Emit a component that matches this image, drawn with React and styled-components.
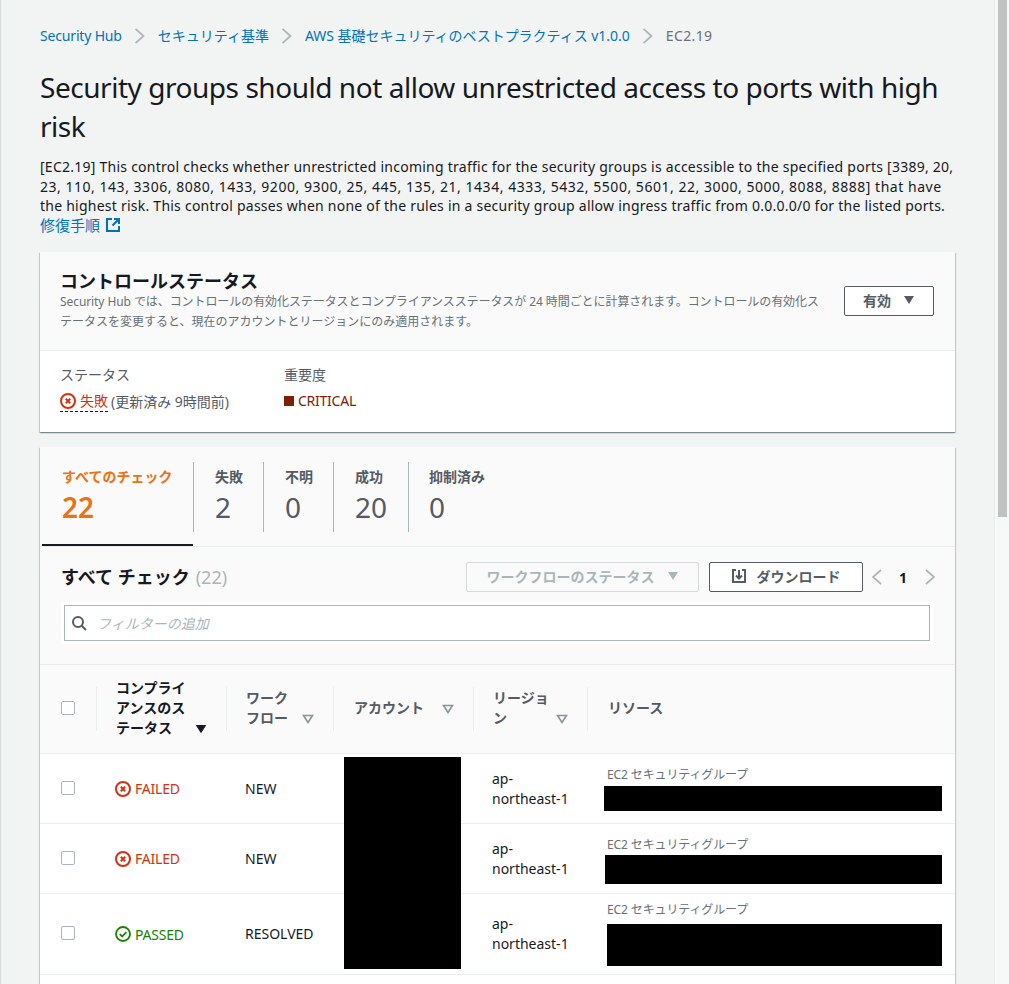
import React from 'react';
import styled, { createGlobalStyle } from 'styled-components';

const FONT = `"Noto Sans", "Noto Sans CJK JP", sans-serif`;

const GlobalStyle = createGlobalStyle`
  html, body {
    margin: 0;
    padding: 0;
    height: 984px;
    overflow: hidden;
    background: #f2f3f3;
  }
  * {
    box-sizing: border-box;
  }
`;

const Page = styled.div`
  display: flex;
  width: 1009px;
  height: 984px;
  overflow: hidden;
  font-family: ${FONT};
  font-size: 14px;
  color: #16191f;
`;

const Main = styled.main`
  flex: 1;
  min-width: 0;
  padding: 26px 39px 0;
  background: #f2f3f3;
  border-left: 1px solid #d5dbdb;
`;

const ScrollTrack = styled.div`
  flex: 0 0 15px;
  padding: 0 2px 0 3px;
  background: #f7f8f8;
  border-left: 1px solid #e8eaea;
`;

const ScrollThumb = styled.div`
  height: 517px;
  background: #c1c1c1;
`;

const Breadcrumbs = styled.nav`
  display: flex;
  align-items: center;
  height: 20px;
  line-height: 20px;
`;

const Crumb = styled.a`
  color: ${(p) => (p.$current ? '#687078' : '#0073bb')};
  white-space: nowrap;
  letter-spacing: ${(p) => p.$spacing || 0}px;
`;

const CrumbChevron = styled.svg`
  width: 12px;
  height: 16px;
  margin: 0 12px;
  flex: none;
`;

const Title = styled.h1`
  margin: 22px 0 11px;
  font-size: 28px;
  font-weight: 400;
  line-height: 39px;
  letter-spacing: -0.46px;
`;

const Description = styled.div`
  margin: 0 0 17px;
  line-height: 19.5px;
`;

const DescriptionLine = styled.div`
  white-space: nowrap;
  letter-spacing: ${(p) => p.$spacing}px;
`;

const ExternalLink = styled.a`
  display: inline-flex;
  align-items: center;
  gap: 6px;
  color: #0073bb;
  font-size: 15px;
`;

const Card = styled.section`
  background: #fff;
  box-shadow: 0 1px 1px 0 rgba(0, 28, 36, 0.3), 1px 1px 1px 0 rgba(0, 28, 36, 0.15),
    -1px 1px 1px 0 rgba(0, 28, 36, 0.15);
  margin-bottom: 15px;
`;

const CardHeader = styled.header`
  display: flex;
  justify-content: space-between;
  align-items: center;
  height: 99px;
  padding: 0 21px 0 20px;
  background: #fafafa;
  border-bottom: 1px solid #eaeded;
`;

const CardHeading = styled.div`
  width: 765px;
`;

const CardTitle = styled.h2`
  margin: 0;
  font-size: 18px;
  font-weight: 700;
  line-height: 22px;
`;

const CardSub = styled.p`
  margin: 0;
  font-size: 12px;
  line-height: 20px;
  color: #687078;
`;

const TightLine = styled.span`
  letter-spacing: -0.08px;
  white-space: nowrap;
`;

const Button = styled.button`
  display: flex;
  align-items: center;
  justify-content: center;
  gap: ${(p) => p.$gap || 12}px;
  flex: none;
  width: ${(p) => p.$width}px;
  height: 30px;
  margin-left: ${(p) => p.$left || 0}px;
  padding: 0 0 2px;
  background: ${(p) => (p.$disabled ? 'transparent' : '#fff')};
  border: 1px solid ${(p) => (p.$disabled ? '#d5dbdb' : '#545b64')};
  border-radius: 2px;
  color: ${(p) => (p.$disabled ? '#aab7b8' : '#545b64')};
  font-family: ${FONT};
  font-size: 14px;
  font-weight: 700;
  white-space: nowrap;
`;

const StatusBody = styled.div`
  display: flex;
  height: 81px;
  padding: 14px 20px 0;
`;

const StatusColumn = styled.div`
  width: ${(p) => p.$width}px;
`;

const StatusLabel = styled.div`
  color: #545b64;
  line-height: 20px;
  margin-bottom: 6px;
`;

const StatusValue = styled.div`
  display: flex;
  align-items: center;
  line-height: 20px;
  color: #545b64;
`;

const StatusTip = styled.span`
  display: inline-flex;
  align-items: center;
  gap: 4px;
  color: #d13212;
  border-bottom: 1px dashed #16191f;
  margin-right: 3px;
`;

const Severity = styled.span`
  display: inline-flex;
  align-items: center;
  gap: 4px;
  color: #7d2105;
  letter-spacing: -0.25px;
`;

const SeveritySquare = styled.i`
  width: 10px;
  height: 10px;
  background: #7d2105;
`;

const Tabs = styled.div`
  display: flex;
  height: 100px;
  padding-left: 2px;
  background: #fafafa;
  border-bottom: 1px solid #eaeded;
`;

const Tab = styled.div`
  width: ${(p) => p.$width}px;
  height: 99px;
  padding-top: 15px;
  border-bottom: 2px solid ${(p) => (p.$active ? '#16191f' : 'transparent')};
`;

const TabInner = styled.div`
  height: 70px;
  margin-right: -1px;
  padding: 5px 0 0 ${(p) => p.$pad}px;
  border-right: ${(p) => (p.$last ? 'none' : '1px solid #aab7b8')};
  color: ${(p) => (p.$active ? '#ec7211' : '#545b64')};
`;

const TabLabel = styled.div`
  font-size: 14px;
  font-weight: 700;
  line-height: 20px;
  white-space: nowrap;
`;

const TabCount = styled.div`
  font-size: 28px;
  line-height: 40px;
  font-weight: ${(p) => (p.$active ? 600 : 400)};
`;

const Toolbar = styled.div`
  height: 118px;
  padding: 15px 22px 0 21px;
  background: #fafafa;
  border-bottom: 1px solid #eaeded;
`;

const ToolbarTop = styled.div`
  display: flex;
  align-items: center;
  height: 30px;
`;

const ToolbarTitle = styled.h2`
  flex: 1;
  margin: 0;
  padding-bottom: 2px;
  font-size: 18px;
  font-weight: 700;
  white-space: nowrap;
`;

const ToolbarCount = styled.span`
  font-weight: 400;
  color: #aab7b8;
  font-size: 18px;
  margin-left: 6px;
`;

const Pager = styled.div`
  display: flex;
  align-items: center;
  margin: 0 -4px 0 7px;
`;

const PagerNumber = styled.span`
  width: 39px;
  padding-right: 1px;
  text-align: center;
  font-size: 14px;
  font-weight: 700;
`;

const FilterWrap = styled.div`
  margin-top: 10px;
  height: 42px;
  padding: 3px;
  background: #fff;
`;

const FilterBox = styled.div`
  display: flex;
  align-items: center;
  gap: 10px;
  height: 36px;
  padding-left: 6px;
  border: 1px solid #aab7b8;
  color: #aab7b8;
  font-style: italic;
`;

const HeadRow = styled.div`
  display: grid;
  grid-template-columns: 56px 130px 107px 140px 114px 1fr;
  align-items: center;
  height: 89px;
  padding-bottom: 2px;
  background: #fafafa;
  border-bottom: 1px solid #eaeded;
`;

const HeadCell = styled.div`
  display: flex;
  justify-content: ${(p) => (p.$center ? 'center' : 'space-between')};
  align-items: center;
  height: 60px;
  padding: ${(p) => (p.$center ? '0' : '0 19px 0 20px')};
  background: ${(p) => (p.$plain ? 'none' : 'linear-gradient(#eaeded, #eaeded) left calc(50% + 1px) / 1px 44px no-repeat')};
`;

const HeadInner = styled.div`
  display: flex;
  justify-content: space-between;
  align-items: flex-end;
  width: 100%;
`;

const HeadText = styled.span`
  margin-left: ${(p) => p.$shift || 0}px;
  font-weight: 700;
  line-height: 20px;
  color: ${(p) => (p.$dark ? '#16191f' : '#545b64')};
`;

const SortIcon = styled.svg`
  width: 12px;
  height: 10px;
  margin-bottom: 4px;
  flex: none;
`;

const Check = styled.span`
  display: block;
  width: 14px;
  height: 14px;
  background: #fff;
  border: 1px solid #aab7b8;
  border-radius: 2px;
`;

const Rows = styled.div`
  position: relative;
  background: #fff;
  padding-bottom: 10px;
`;

const Row = styled.div`
  display: grid;
  grid-template-columns: 56px 130px 107px 140px 114px 1fr;
  align-items: center;
  height: ${(p) => p.$height}px;
  border-bottom: 1px solid #eaeded;
`;

const CheckCell = styled.div`
  display: flex;
  justify-content: center;
  padding-bottom: 2px;
`;

const StatusCell = styled.div`
  display: flex;
  align-items: center;
  gap: 4px;
  padding-left: 19px;
  color: ${(p) => (p.$ok ? '#1d8102' : '#d13212')};
  letter-spacing: -0.2px;
`;

const TextCell = styled.div`
  padding-left: ${(p) => p.$pad || 0}px;
  line-height: 20px;
`;

const ResourceCell = styled.div`
  align-self: start;
  padding-top: ${(p) => p.$top}px;
`;

const ResourceType = styled.div`
  padding-left: 20px;
  font-size: 12px;
  line-height: 16px;
  color: #687078;
  letter-spacing: -0.12px;
`;

const Redacted = styled.div`
  height: ${(p) => p.$height}px;
  margin: ${(p) => p.$gap}px 13px 0 ${(p) => p.$inset}px;
  background: #000;
`;

const AccountMask = styled.div`
  position: absolute;
  left: 304px;
  top: 3px;
  width: 117px;
  height: 212px;
  background: #000;
`;

const Chevron = ({ dir = 'right', color = '#879596' }) => (
  <svg width="14" height="16" viewBox="0 0 14 16" fill="none" stroke={color} strokeWidth="1.7">
    <path d={dir === 'right' ? 'M3 1l8 7-8 7' : 'M11 1L3 8l8 7'} />
  </svg>
);

const CrumbSep = () => (
  <CrumbChevron viewBox="0 0 12 16" fill="none" stroke="#aab7b8" strokeWidth="1.8">
    <path d="M1.5 .8l8 7.2-8 7.2" />
  </CrumbChevron>
);

const FailIcon = () => (
  <svg width="16" height="16" viewBox="0 0 16 16" fill="none" stroke="#d13212" strokeWidth="2" style={{ flex: 'none' }}>
    <circle cx="8" cy="8" r="7" />
    <path d="M5.8 5.8l4.4 4.4M10.2 5.8l-4.4 4.4" />
  </svg>
);

const PassIcon = () => (
  <svg width="16" height="16" viewBox="0 0 16 16" fill="none" stroke="#1d8102" strokeWidth="1.8" style={{ flex: 'none' }}>
    <circle cx="8" cy="8" r="7" />
    <path d="M4.8 8.2l2.3 2.3 4.2-4.4" />
  </svg>
);

const Caret = ({ color }) => (
  <svg width="12" height="10" viewBox="0 0 12 10" fill={color} style={{ flex: 'none' }}>
    <path d="M1 1h10L6 9z" />
  </svg>
);

const Sort = ({ active }) => (
  <SortIcon viewBox="0 0 12 10" fill={active ? '#16191f' : 'none'} stroke={active ? '#16191f' : '#879596'} strokeWidth={active ? 1 : 1.6}>
    <path d="M1.5 1.5h9L6 8.5z" />
  </SortIcon>
);

const DESCRIPTION = [
  { text: '[EC2.19] This control checks whether unrestricted incoming traffic for the security groups is accessible to the specified ports [3389, 20,', spacing: 0.25 },
  { text: '23, 110, 143, 3306, 8080, 1433, 9200, 9300, 25, 445, 135, 21, 1434, 4333, 5432, 5500, 5601, 22, 3000, 5000, 8088, 8888] that have', spacing: 0.525 },
  { text: 'the highest risk. This control passes when none of the rules in a security group allow ingress traffic from 0.0.0.0/0 for the listed ports.', spacing: 0.24 },
];

const TABS = [
  { label: 'すべてのチェック', count: 22, width: 151, pad: 20, active: true },
  { label: '失敗', count: 2, width: 70, pad: 22 },
  { label: '不明', count: 0, width: 70, pad: 22 },
  { label: '成功', count: 20, width: 75, pad: 22 },
  { label: '抑制済み', count: 0, width: 120, pad: 21, last: true },
];

const ROWS = [
  { status: 'FAILED', workflow: 'NEW', height: 70, top: 13, gap: 3, inset: 17, mask: 25 },
  { status: 'FAILED', workflow: 'NEW', height: 70, top: 13, gap: 2, inset: 18, mask: 29 },
  { status: 'PASSED', workflow: 'RESOLVED', height: 81, top: 8, gap: 6, inset: 20, mask: 42 },
];

export default function App() {
  return (
    <>
      <GlobalStyle />
      <Page>
        <Main>
          <Breadcrumbs>
            <Crumb $spacing={-0.17}>Security Hub</Crumb>
            <CrumbSep />
            <Crumb>セキュリティ基準</Crumb>
            <CrumbSep />
            <Crumb $spacing={-0.03}>AWS 基礎セキュリティのベストプラクティス v1.0.0</Crumb>
            <CrumbSep />
            <Crumb $current $spacing={0.4}>EC2.19</Crumb>
          </Breadcrumbs>

          <Title>Security groups should not allow unrestricted access to ports with high risk</Title>
          <Description>
            {DESCRIPTION.map((line) => (
              <DescriptionLine key={line.text} $spacing={line.spacing}>
                {line.text}
              </DescriptionLine>
            ))}
            <ExternalLink>
              修復手順
              <svg width="14" height="14" viewBox="0 0 14 14" fill="none" stroke="#0073bb" strokeWidth="2">
                <path d="M6 1H1v12h12V8M8 1h5v5M13 1L6.5 7.5" />
              </svg>
            </ExternalLink>
          </Description>

          <Card>
            <CardHeader>
              <CardHeading>
                <CardTitle>コントロールステータス</CardTitle>
                <CardSub>
                  <TightLine>Security Hub では、コントロールの有効化ステータスとコンプライアンスステータスが 24 時間ごとに計算されます。コントロールの有効化ス</TightLine>
                  <br />
                  テータスを変更すると、現在のアカウントとリージョンにのみ適用されます。
                </CardSub>
              </CardHeading>
              <Button $width={90}>
                有効
                <Caret color="#545b64" />
              </Button>
            </CardHeader>
            <StatusBody>
              <StatusColumn $width={224}>
                <StatusLabel>ステータス</StatusLabel>
                <StatusValue>
                  <StatusTip>
                    <FailIcon />
                    失敗
                  </StatusTip>
                  (更新済み 9時間前)
                </StatusValue>
              </StatusColumn>
              <StatusColumn $width={200}>
                <StatusLabel>重要度</StatusLabel>
                <StatusValue>
                  <Severity>
                    <SeveritySquare />
                    CRITICAL
                  </Severity>
                </StatusValue>
              </StatusColumn>
            </StatusBody>
          </Card>

          <Card>
            <Tabs>
              {TABS.map((t) => (
                <Tab key={t.label} $width={t.width} $active={t.active}>
                  <TabInner $pad={t.pad} $active={t.active} $last={t.last}>
                    <TabLabel>{t.label}</TabLabel>
                    <TabCount $active={t.active}>{t.count}</TabCount>
                  </TabInner>
                </Tab>
              ))}
            </Tabs>

            <Toolbar>
              <ToolbarTop>
                <ToolbarTitle>
                  すべて チェック<ToolbarCount>(22)</ToolbarCount>
                </ToolbarTitle>
                <Button $width={233} $disabled>
                  ワークフローのステータス
                  <Caret color="#aab7b8" />
                </Button>
                <Button $width={154} $gap={11} $left={10}>
                  <svg width="14" height="14" viewBox="0 0 14 14" fill="none" stroke="#545b64" strokeWidth="2">
                    <path d="M4 1H1v12h12V1h-3M7 1v8M4 6.5L7 9.5l3-3" />
                  </svg>
                  ダウンロード
                </Button>
                <Pager>
                  <Chevron dir="left" color="#aab7b8" />
                  <PagerNumber>1</PagerNumber>
                  <Chevron color="#aab7b8" />
                </Pager>
              </ToolbarTop>
              <FilterWrap>
                <FilterBox>
                  <svg width="16" height="16" viewBox="0 0 16 16" fill="none" stroke="#545b64" strokeWidth="2">
                    <circle cx="7" cy="7" r="5" />
                    <path d="M10.5 10.5L15 15" />
                  </svg>
                  フィルターの追加
                </FilterBox>
              </FilterWrap>
            </Toolbar>

            <HeadRow>
              <HeadCell $center $plain>
                <Check />
              </HeadCell>
              <HeadCell>
                <HeadInner>
                  <HeadText $dark>
                    コンプライ
                    <br />
                    アンスのス
                    <br />
                    テータス
                  </HeadText>
                  <Sort active />
                </HeadInner>
              </HeadCell>
              <HeadCell>
                <HeadInner>
                  <HeadText>
                    ワーク
                    <br />
                    フロー
                  </HeadText>
                  <Sort />
                </HeadInner>
              </HeadCell>
              <HeadCell>
                <HeadInner>
                  <HeadText $shift={1}>アカウント</HeadText>
                  <Sort />
                </HeadInner>
              </HeadCell>
              <HeadCell>
                <HeadInner>
                  <HeadText>
                    リージョ
                    <br />ン
                  </HeadText>
                  <Sort />
                </HeadInner>
              </HeadCell>
              <HeadCell>
                <HeadInner>
                  <HeadText $shift={1}>リソース</HeadText>
                </HeadInner>
              </HeadCell>
            </HeadRow>

            <Rows>
              {ROWS.map((r, i) => (
                <Row key={i} $height={r.height}>
                  <CheckCell>
                    <Check />
                  </CheckCell>
                  <StatusCell $ok={r.status === 'PASSED'}>
                    {r.status === 'PASSED' ? <PassIcon /> : <FailIcon />}
                    {r.status}
                  </StatusCell>
                  <TextCell $pad={19}>{r.workflow}</TextCell>
                  <div />
                  <TextCell $pad={19}>
                    ap-
                    <br />
                    northeast-1
                  </TextCell>
                  <ResourceCell $top={r.top}>
                    <ResourceType>EC2 セキュリティグループ</ResourceType>
                    <Redacted $height={r.mask} $gap={r.gap} $inset={r.inset} />
                  </ResourceCell>
                </Row>
              ))}
              <AccountMask />
            </Rows>
          </Card>
        </Main>
        <ScrollTrack>
          <ScrollThumb />
        </ScrollTrack>
      </Page>
    </>
  );
}
